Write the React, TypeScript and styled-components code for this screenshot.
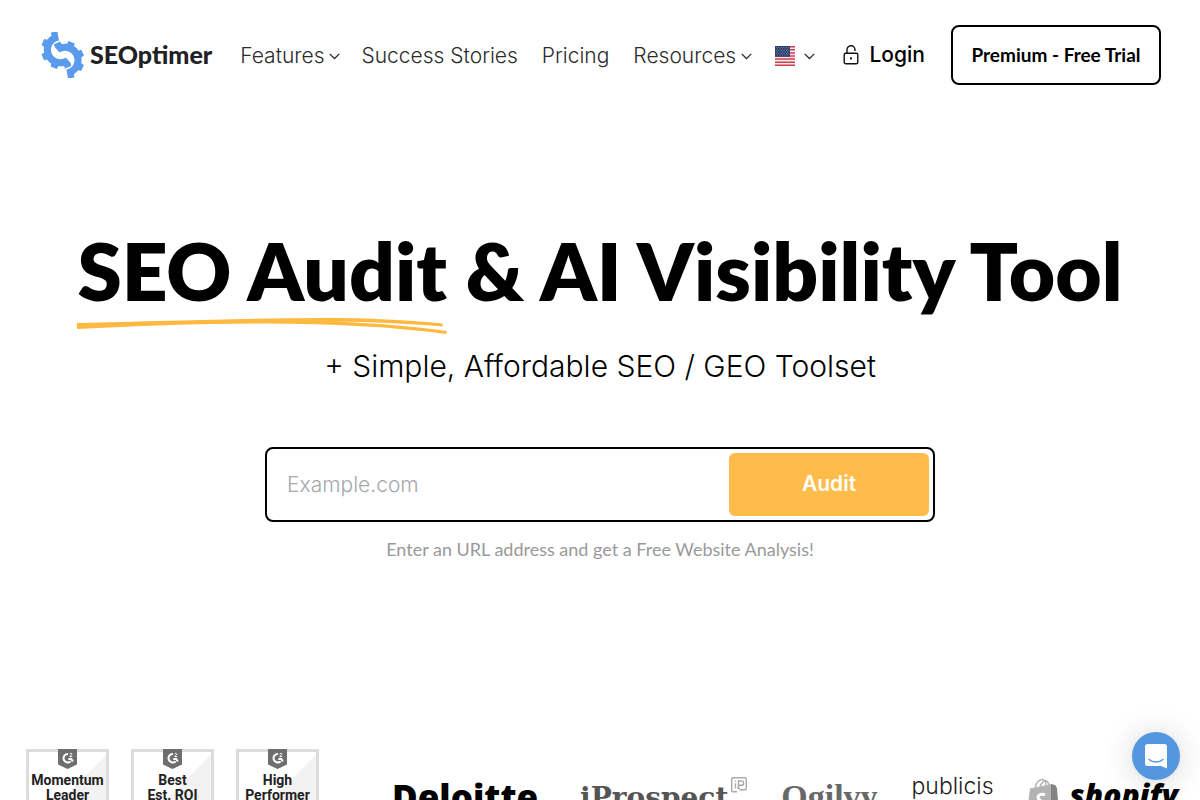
import React from "react";
import styled, { createGlobalStyle } from "styled-components";

const display = `Lato, "Liberation Sans", sans-serif`;
const text = `Inter, "Liberation Sans", sans-serif`;

const GlobalStyle = createGlobalStyle`
  *, *::before, *::after { box-sizing: border-box; }
  body { margin: 0; background: #fff; color: #000; font-family: ${text}; }
`;

const Page = styled.div`
  display: flex;
  flex-direction: column;
  min-height: 100vh;
  overflow: hidden;
`;

const Header = styled.header`
  display: flex;
  align-items: center;
  justify-content: space-between;
  padding: 25px 39px 0 41px;
`;

const HeaderGroup = styled.div`
  display: flex;
  align-items: center;
  gap: 28px;
`;

const AccountGroup = styled(HeaderGroup)`
  gap: 26px;
`;

const Brand = styled.a`
  display: flex;
  align-items: center;
  gap: 5px;
  color: #202124;
  font: 900 25px/32px ${display};
  text-decoration: none;
`;

const BrandName = styled.span`
  padding-bottom: 2px;
`;

const Nav = styled.nav`
  display: flex;
  align-items: center;
  gap: 24px;
  padding-top: 2px;
`;

const NavLink = styled.a`
  color: #2b2b2b;
  font: 300 21px/28px ${text};
  text-decoration: none;
`;

const NavMenu = styled.button`
  display: flex;
  align-items: center;
  gap: 5px;
  margin-right: -3px;
  padding: 0;
  border: 0;
  background: none;
  color: #2b2b2b;
  font: 300 21px/28px ${text};
  cursor: pointer;
`;

const LanguageMenu = styled(NavMenu)`
  gap: 9px;
  margin: 0 0 0 2px;
`;

const Login = styled.a`
  display: flex;
  align-items: center;
  gap: 11px;
  color: #000;
  font: 500 21px/28px ${text};
  text-decoration: none;
`;

const TrialButton = styled.button`
  min-width: 210px;
  height: 60px;
  padding: 0 16px;
  border: 2px solid #000;
  border-radius: 8px;
  background: #fff;
  color: #000;
  font: 700 19px/24px ${display};
  cursor: pointer;
`;

const Hero = styled.main`
  display: flex;
  flex-direction: column;
  align-items: center;
  padding: 137px 24px 0;
  text-align: center;
`;

const Title = styled.h1`
  margin: 0;
  font: 800 80px/96px ${display};
`;

const Underlined = styled.span`
  position: relative;
  display: inline-block;
`;

const Swoosh = styled.svg`
  position: absolute;
  top: 96px;
  left: 0;
  width: 100%;
  height: 16px;
`;

const Subtitle = styled.p`
  margin: 28px 0 0;
  font: 300 30px/40px ${text};
`;

const AuditForm = styled.form`
  display: flex;
  width: 100%;
  max-width: 670px;
  height: 75px;
  margin-top: 61px;
  padding: 4px;
  border: 2px solid #000;
  border-radius: 8px;
`;

const UrlInput = styled.input`
  flex: 1;
  min-width: 0;
  padding: 0 16px;
  border: 0;
  outline: 0;
  background: transparent;
  color: #000;
  font: 300 21px/28px ${text};
  &::placeholder { color: #a5a8ad; opacity: 1; }
`;

const AuditButton = styled.button`
  width: 200px;
  height: 63px;
  padding: 0 0 2px;
  border: 0;
  border-radius: 6px;
  background: #ffbc4a;
  color: #fff;
  font: 600 21px/28px ${text};
  cursor: pointer;
`;

const Hint = styled.label`
  margin-top: 15px;
  color: #999;
  font: 400 18px/24px ${display};
`;

const Proof = styled.section`
  display: flex;
  align-items: flex-start;
  justify-content: space-between;
  margin-top: 188px;
  padding: 0 22px 24px 26px;
`;

const Badges = styled.div`
  display: flex;
  gap: 22px;
`;

const Badge = styled.div`
  display: flex;
  flex-direction: column;
  align-items: center;
  width: 83px;
  height: 108px;
  border: 3px solid #dcdcdc;
  background: linear-gradient(135deg, #fff 56px, #f2f2f2 57px);
  color: #222;
  font: 700 14px/15px Roboto, sans-serif;
  text-align: center;
  white-space: nowrap;
  & > svg { flex: none; margin: -3px 0 4px; }
`;

const Clients = styled.div`
  display: flex;
  align-items: flex-start;
  justify-content: space-between;
  flex: 1;
  max-width: 786px;
  margin-left: 60px;
`;

const Wordmark = styled.span<{ $font: string; $color: string; $top: number }>`
  display: flex;
  align-items: flex-start;
  padding-top: ${(p) => p.$top}px;
  color: ${(p) => p.$color};
  font: ${(p) => p.$font};
  white-space: nowrap;
`;

const ShopifyMark = styled(Wordmark)`
  gap: 10px;
  & > svg { flex: none; margin-top: 1px; }
`;

const ProspectMark = styled(Wordmark)`
  gap: 3px;
  margin-left: 8px;
  & > svg { flex: none; }
`;

const ChatButton = styled.button`
  position: fixed;
  right: 20px;
  bottom: 20px;
  display: grid;
  place-items: center;
  width: 48px;
  height: 48px;
  padding: 0;
  border: 0;
  border-radius: 50%;
  background: #5596e0;
  box-shadow: 0 1px 6px rgba(0, 0, 0, 0.06), 0 2px 32px rgba(0, 0, 0, 0.16);
  cursor: pointer;
`;

/* Half of a cog: an open ring with five teeth along its outer edge. */
function cogPath(cx: number, cy: number) {
  const at = (r: number, deg: number) => {
    const a = (deg * Math.PI) / 180;
    return `${(cx + r * Math.cos(a)).toFixed(2)} ${(cy + r * Math.sin(a)).toFixed(2)}`;
  };
  const teeth = [-109, -156, -203, -250, -295];
  let d = "";
  teeth.forEach((t, i) => {
    d += i === 0 ? `M${at(16.5, t + 10)}` : `A16.5 16.5 0 0 0 ${at(16.5, t + 13)}`;
    d += `L${at(19.4, t + 10)}L${at(19.4, t - 10)}L${at(16.5, t - 13)}`;
  });
  return `${d}L${at(9.4, -306)}A9.4 9.4 0 1 1 ${at(9.4, -98)}Z`;
}

const CogLogo = () => (
  <svg width="44" height="46" viewBox="0 0 44 46" fill="#5b9bed" aria-hidden="true">
    <path d={cogPath(19.3, 17.8)} />
    <path d={cogPath(19.3, 17.8)} transform="rotate(180 21.7 23)" />
  </svg>
);

const Chevron = () => (
  <svg width="11" height="7" viewBox="0 0 11 7" fill="none" stroke="#2b2b2b" strokeWidth="1.3" aria-hidden="true">
    <path d="M.7 .9 5.5 5.5 10.3 .9" />
  </svg>
);

const Flag = () => (
  <svg width="20" height="20" viewBox="0 0 20 20" aria-hidden="true">
    <path fill="#f4e9ec" d="M0 0h20v20H0z" />
    <path
      stroke="#cf3f4b"
      strokeWidth="1.54"
      d="M0 .77h20M0 3.85h20M0 6.93h20M0 10h20M0 13.08h20M0 16.16h20M0 19.23h20"
    />
    <path fill="#2f416f" d="M0 0h15v10.8H0z" />
    <path
      stroke="#8d99b5"
      strokeWidth=".8"
      strokeDasharray=".8 1.7"
      d="M1 1.5h13.5M2.2 3h12M1 4.5h13.5M2.2 6h12M1 7.5h13.5M2.2 9h12"
    />
  </svg>
);

const Lock = () => (
  <svg width="16" height="20" viewBox="0 0 16 20" fill="none" stroke="#111" strokeWidth="1.4" aria-hidden="true">
    <rect x="1.2" y="8.2" width="13.6" height="10.6" rx="1.6" />
    <path d="M4 8.2V4.9a4 4 0 0 1 8-.4V6" />
    <path d="M8 12.2v2.4" strokeWidth="1.8" />
  </svg>
);

const G2Shield = () => (
  <svg width="19" height="20" viewBox="0 0 19 20" aria-hidden="true">
    <path fill="#6e6e6e" d="M0 0h19v15.5L9.5 20 0 15.5z" />
    <path
      fill="none"
      stroke="#fff"
      strokeWidth="2"
      d="M10 4.9a4.3 4.3 0 1 0 2.6 7.6M10.3 9.9h3l1.5 2.6"
    />
    <path fill="none" stroke="#fff" strokeWidth="1" d="M11.7 5.2c.2-1.2 2.3-1.1 2.1.1-.1.9-1.8 1.2-2.1 2.3h2.5" />
  </svg>
);

const ShoppingBag = () => (
  <svg width="32" height="38" viewBox="0 0 32 38" aria-hidden="true">
    <path fill="none" stroke="#b3b3b3" strokeWidth="1.4" d="M8 10C9 4 13 1 16 1.5S19 6 19 9M13 9c1-4 4-7 6.5-6 2 .8 2.2 3 2.5 5" />
    <path fill="#b3b3b3" d="M3 10.5 25 6v32L0 34z" />
    <path fill="#838383" d="m24 6 4 1 2 3 2 25-8 3z" />
    <path fill="none" stroke="#fff" strokeWidth="3" d="M18 17c-3-1.500-7-.5-7 2.500 0 3 5 3 5 6.500 0 3-3.500 3.500-6.500 1.800" />
  </svg>
);

const ProspectBox = () => (
  <svg width="16" height="16" viewBox="0 0 16 16" fill="none" stroke="#a9a9a9" strokeWidth="1.4" aria-hidden="true">
    <path d="M6 14.8H2A1.3 1.3 0 0 1 .7 13.5V2A1.3 1.3 0 0 1 2 .7h12A1.3 1.3 0 0 1 15.3 2v9.5a1.3 1.3 0 0 1-1.3 1.3H8.5" />
    <path d="M4.5 6.2v5M4.5 3.5v1.3M7.5 11.2V4h3a2 2 0 0 1 0 4.3h-3M6.5 11.2h2.5" />
  </svg>
);

const ChatIcon = () => (
  <svg width="22" height="25" viewBox="0 0 22 25" aria-hidden="true">
    <path fill="#fff" d="M2.5 0h17A2.5 2.5 0 0 1 22 2.5V24.5l-6-2.5H2.5A2.5 2.5 0 0 1 0 19.5v-17A2.5 2.5 0 0 1 2.5 0z" />
    <path fill="none" stroke="#5596e0" strokeWidth="1.4" strokeLinecap="round" d="M4 15.5c4 3.3 10 3.3 14 0" />
  </svg>
);

const badges = [
  ["Momentum", "Leader"],
  ["Best", "Est. ROI"],
  ["High", "Performer"],
];

export default function App() {
  return (
    <Page>
      <GlobalStyle />
      <Header>
        <HeaderGroup>
          <Brand href="#">
            <CogLogo />
            <BrandName>SEOptimer</BrandName>
          </Brand>
          <Nav>
            <NavMenu type="button">Features<Chevron /></NavMenu>
            <NavLink href="#stories">Success Stories</NavLink>
            <NavLink href="#pricing">Pricing</NavLink>
            <NavMenu type="button">Resources<Chevron /></NavMenu>
            <LanguageMenu type="button" aria-label="Language"><Flag /><Chevron /></LanguageMenu>
          </Nav>
        </HeaderGroup>
        <AccountGroup>
          <Login href="#login"><Lock />Login</Login>
          <TrialButton type="button">Premium - Free Trial</TrialButton>
        </AccountGroup>
      </Header>

      <Hero>
        <Title>
          <Underlined>
            SEO Audit
            <Swoosh viewBox="0 0 374 16" preserveAspectRatio="none" aria-hidden="true">
              <path
                fill="#ffb840"
                d="M0 5C90 3 170 0 250 0c45 0 85 2 120 5.5v3C330 5.5 300 4 262 3.6 305 5.5 340 8.500 374 13v3C320 9 260 5.500 190 5.500 125 5.500 60 8 0 11z"
              />
            </Swoosh>
          </Underlined>{" "}
          &amp; AI Visibility Tool
        </Title>
        <Subtitle>+ Simple, Affordable SEO / GEO Toolset</Subtitle>
        <AuditForm onSubmit={(e) => e.preventDefault()}>
          <UrlInput id="site-url" type="text" placeholder="Example.com" />
          <AuditButton type="submit">Audit</AuditButton>
        </AuditForm>
        <Hint htmlFor="site-url">Enter an URL address and get a Free Website Analysis!</Hint>
      </Hero>

      <Proof>
        <Badges>
          {badges.map((lines) => (
            <Badge key={lines[0]}>
              <G2Shield />
              {lines.map((line) => <span key={line}>{line}</span>)}
            </Badge>
          ))}
        </Badges>
        <Clients>
          <Wordmark $font={`800 35px/40px "Open Sans", sans-serif`} $color="#000" $top={28}>Deloitte</Wordmark>
          <ProspectMark $font={`700 28px/42px "DejaVu Serif", serif`} $color="#555" $top={28}>
            iProspect<ProspectBox />
          </ProspectMark>
          <Wordmark $font={`700 34px/36px "Liberation Serif", serif`} $color="#686868" $top={30}>Ogilvy</Wordmark>
          <Wordmark $font={`300 23px/28px ${text}`} $color="#222" $top={23}>publicis</Wordmark>
          <ShopifyMark $font={`italic 800 30px/36px "Open Sans", sans-serif`} $color="#000" $top={28}>
            <ShoppingBag />shopify
          </ShopifyMark>
        </Clients>
      </Proof>

      <ChatButton type="button" aria-label="Open chat"><ChatIcon /></ChatButton>
    </Page>
  );
}
